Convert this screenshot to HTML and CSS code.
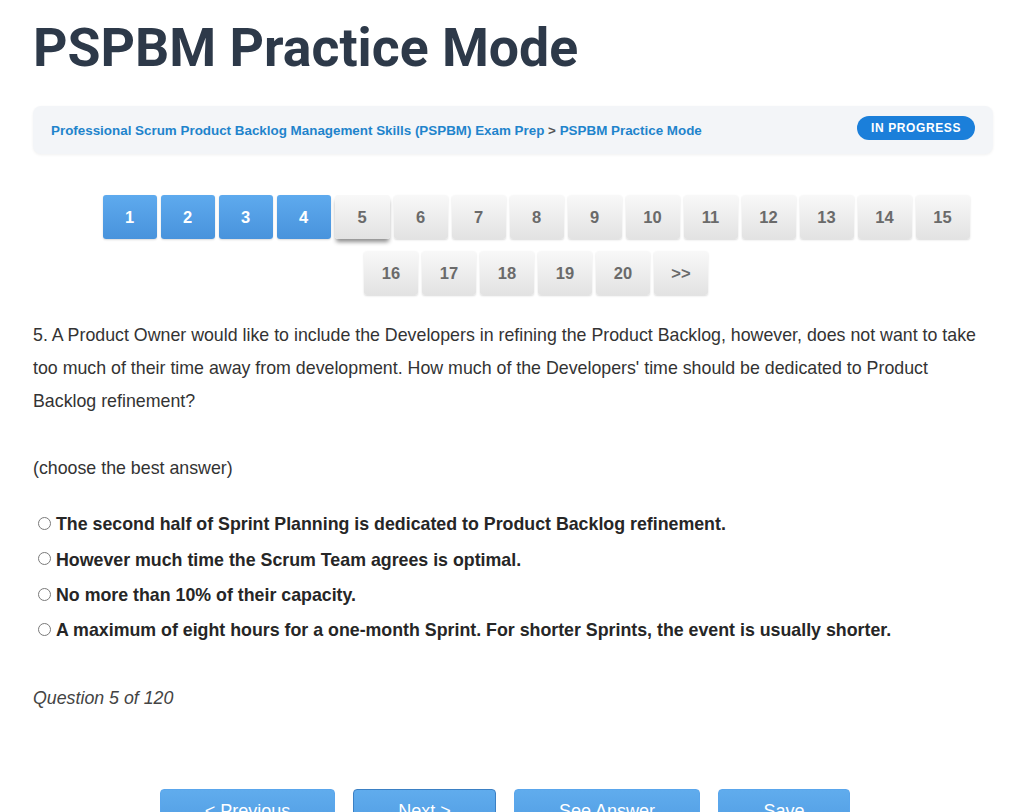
FILE: index.html
```html
<!DOCTYPE html>
<html lang="en">
<head>
    <meta charset="UTF-8">
    <meta name="viewport" content="width=device-width, initial-scale=1.0">
    <title>PSPBM Practice Mode</title>
    <link rel="stylesheet" href="styles.css">
</head>
<body>
    <div class="page">
        <h1>PSPBM Practice Mode</h1>

        <div class="crumb-bar">
            <div class="crumbs">
                <a href="#">Professional Scrum Product Backlog Management Skills (PSPBM) Exam Prep</a>
                <span class="sep">&gt;</span>
                <a href="#">PSPBM Practice Mode</a>
            </div>
            <span class="status">IN PROGRESS</span>
        </div>

        <!-- Question pager -->
        <div class="pager">
            <div class="pager-row">
                <button class="pg done">1</button>
                <button class="pg done">2</button>
                <button class="pg done">3</button>
                <button class="pg done">4</button>
                <button class="pg current">5</button>
                <button class="pg">6</button>
                <button class="pg">7</button>
                <button class="pg">8</button>
                <button class="pg">9</button>
                <button class="pg">10</button>
                <button class="pg">11</button>
                <button class="pg">12</button>
                <button class="pg">13</button>
                <button class="pg">14</button>
                <button class="pg">15</button>
            </div>
            <div class="pager-row">
                <button class="pg">16</button>
                <button class="pg">17</button>
                <button class="pg">18</button>
                <button class="pg">19</button>
                <button class="pg">20</button>
                <button class="pg">&gt;&gt;</button>
            </div>
        </div>

        <p class="question">5. A Product Owner would like to include the Developers in refining the Product Backlog, however, does not want to take too much of their time away from development. How much of the Developers' time should be dedicated to Product Backlog refinement?</p>
        <p class="hint">(choose the best answer)</p>

        <div class="answers">
            <label class="answer"><input type="radio" name="q5"> The second half of Sprint Planning is dedicated to Product Backlog refinement.</label>
            <label class="answer"><input type="radio" name="q5"> However much time the Scrum Team agrees is optimal.</label>
            <label class="answer"><input type="radio" name="q5"> No more than 10% of their capacity.</label>
            <label class="answer"><input type="radio" name="q5"> A maximum of eight hours for a one-month Sprint. For shorter Sprints, the event is usually shorter.</label>
        </div>

        <p class="counter">Question 5 of 120</p>

        <div class="actions">
            <button class="act prev">&lt; Previous</button>
            <button class="act next">Next &gt;</button>
            <button class="act answer-btn">See Answer</button>
            <button class="act save">Save</button>
        </div>
    </div>
</body>
</html>
```

FILE: styles.css
```css
body {
    margin: 0;
    background-color: #ffffff;
    font-family: "Liberation Sans", Arial, sans-serif;
    color: #333333;
}

.page {
    width: 960px;
    margin-left: 33px;
    padding-top: 16px;
}

h1 {
    margin: 0 0 26px 0;
    font-family: Roboto, "Liberation Sans", sans-serif;
    font-size: 53.6px;
    line-height: 1.2;
    font-weight: 700;
    color: #2d3949;
}

/* Breadcrumb bar */
.crumb-bar {
    display: flex;
    align-items: center;
    justify-content: space-between;
    height: 48px;
    padding: 0 18px;
    background-color: #f3f5f8;
    border-radius: 8px;
    box-shadow: 0 1px 3px rgba(0, 0, 0, 0.06);
}

.crumbs {
    font-size: 13.4px;
    font-weight: bold;
    padding-top: 1px;
}

.crumbs a {
    color: #1f84cc;
    text-decoration: none;
}

.crumbs .sep {
    color: #555555;
}

.status {
    display: inline-block;
    height: 24px;
    line-height: 24px;
    padding: 0 14px;
    margin-top: -4px;
    border-radius: 12px;
    background-color: #1b7fda;
    color: #ffffff;
    font-size: 12px;
    font-weight: bold;
    letter-spacing: 0.6px;
}

/* Pager */
.pager {
    margin-top: 41px;
    padding-left: 46px;
    display: flex;
    flex-direction: column;
    align-items: center;
    gap: 12px;
}

.pager-row {
    display: flex;
    gap: 4px;
}

.pg {
    width: 54px;
    height: 44px;
    border: none;
    border-radius: 3px;
    font-family: "Liberation Sans", Arial, sans-serif;
    font-size: 16.5px;
    font-weight: bold;
    color: #6a6a6a;
    background: linear-gradient(#f8f8f8, #e2e2e2);
    box-shadow: 0 1px 2px rgba(0, 0, 0, 0.15);
    cursor: pointer;
}

.pg.done {
    color: #ffffff;
    background: linear-gradient(#5eaaee, #4893dc);
}

.pg.current {
    width: 55px;
    box-shadow: 0 4px 4px -1px rgba(0, 0, 0, 0.45);
}

/* Question */
.question {
    margin: 24px 0 0 0;
    font-size: 17.8px;
    line-height: 33px;
}

.hint {
    margin: 34px 0 0 0;
    font-size: 17.8px;
    line-height: 33px;
}

.answers {
    margin-top: 22px;
}

.answer {
    display: flex;
    align-items: center;
    height: 35.3px;
    font-size: 17.8px;
    font-weight: bold;
    color: #262626;
}

.answer input {
    appearance: none;
    width: 13px;
    height: 13px;
    margin: -3px 5px 0 5px;
    border: 1px solid #7a7a7a;
    border-radius: 50%;
    background-color: #ffffff;
}

.counter {
    margin: 33px 0 0 0;
    font-size: 17.8px;
    line-height: 33px;
    font-style: italic;
    color: #444444;
}

/* Bottom buttons */
.actions {
    margin-top: 74px;
    padding-right: 16px;
    display: flex;
    justify-content: center;
    gap: 18px;
}

.act {
    height: 46px;
    padding: 0 10px;
    border: 1px solid #5aa6ec;
    border-radius: 4px;
    background: linear-gradient(#60aced, #4f9be2);
    color: #ffffff;
    font-family: "Liberation Sans", Arial, sans-serif;
    font-size: 18px;
    cursor: pointer;
}

.act.prev { width: 175px; }
.act.next { width: 143px; border-color: #3b80c4; }
.act.answer-btn { width: 186px; }
.act.save { width: 132px; }
```
